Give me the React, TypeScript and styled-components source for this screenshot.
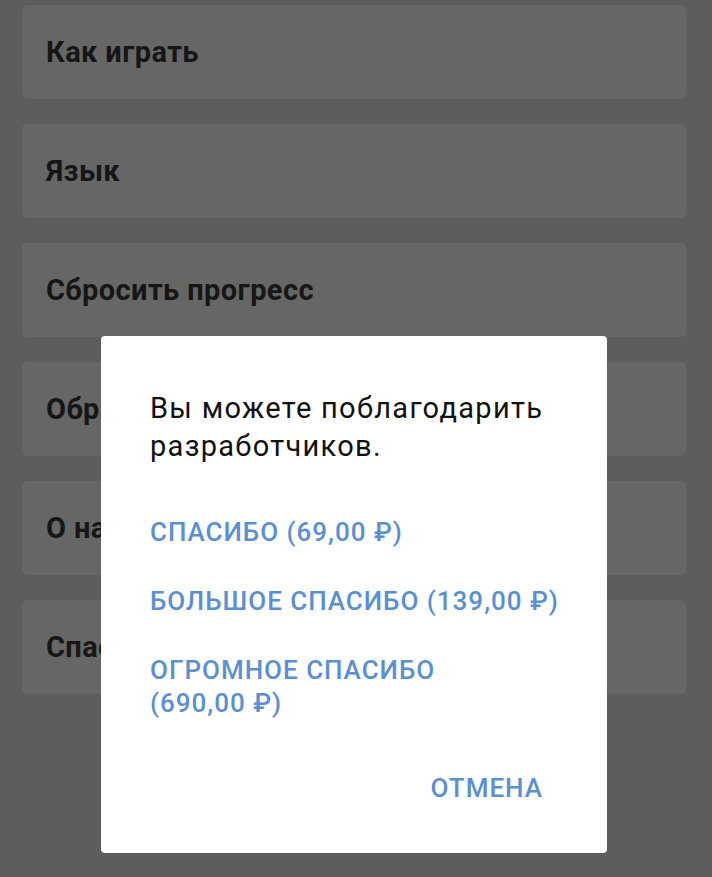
import styled, { createGlobalStyle } from "styled-components";

const GlobalStyle = createGlobalStyle`
  html, body {
    margin: 0;
    padding: 0;
    background: #5d5d5d;
    font-family: Roboto, "Noto Sans", "Liberation Sans", sans-serif;
  }
  * {
    box-sizing: border-box;
  }
`;

const menuItems = [
  "Как играть",
  "Язык",
  "Сбросить прогресс",
  "Обратная связь",
  "О нас",
  "Спасибо разработчикам",
];

// nbsp keeps the price and the ruble sign together
const options = [
  "СПАСИБО (69,00\u00a0₽)",
  "БОЛЬШОЕ СПАСИБО (139,00\u00a0₽)",
  "ОГРОМНОЕ СПАСИБО (690,00\u00a0₽)",
];

export default function App() {
  return (
    <>
      <GlobalStyle />
      <Screen>
        <Menu>
          {menuItems.map((item) => (
            <MenuCard key={item}>{item}</MenuCard>
          ))}
        </Menu>
        <Overlay>
          <Dialog>
            <Message>Вы можете поблагодарить разработчиков.</Message>
            <Options>
              {options.map((o) => (
                <OptionButton key={o}>{o}</OptionButton>
              ))}
            </Options>
            <Actions>
              <OptionButton>ОТМЕНА</OptionButton>
            </Actions>
          </Dialog>
        </Overlay>
      </Screen>
    </>
  );
}

const Screen = styled.div`
  position: relative;
  width: 712px;
  height: 877px;
  overflow: hidden;
  background: #5d5d5d;
`;

const Menu = styled.div`
  display: flex;
  flex-direction: column;
  gap: 25px;
  padding: 5px 26px 0 22px;
`;

const MenuCard = styled.div`
  height: 94px;
  background: #666666;
  border-radius: 5px;
  display: flex;
  align-items: center;
  padding-left: 24px;
  font-size: 29px;
  letter-spacing: 0.4px;
  font-weight: 700;
  color: #161616;
  white-space: nowrap;
  overflow: hidden;
`;

const Overlay = styled.div`
  position: absolute;
  inset: 0;
`;

const Dialog = styled.div`
  position: absolute;
  left: 101px;
  top: 336px;
  width: 506px;
  height: 517px;
  background: #ffffff;
  border-radius: 4px;
  padding: 53px 20px 48px 49px;
  display: flex;
  flex-direction: column;
`;

const Message = styled.div`
  font-size: 29px;
  letter-spacing: 1.3px;
  line-height: 38px;
  color: #111111;
  width: 420px;
`;

const Options = styled.div`
  display: flex;
  flex-direction: column;
  margin-top: 33px;
  width: 414px;
`;

const OptionButton = styled.div`
  font-size: 26px;
  letter-spacing: 1px;
  line-height: 33px;
  font-weight: 500;
  color: #5a8fd6;
  padding: 18px 0;
  cursor: pointer;
`;

const Actions = styled.div`
  margin-top: auto;
  margin-bottom: -18px;
  padding-right: 44px;
  display: flex;
  justify-content: flex-end;
`;
